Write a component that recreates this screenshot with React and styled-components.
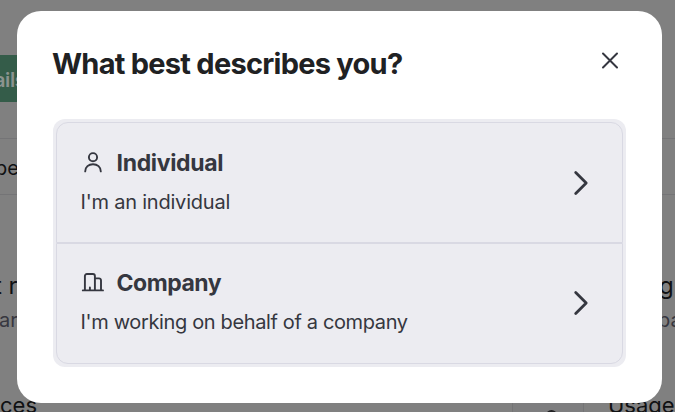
import React from 'react';
import styled, { createGlobalStyle } from 'styled-components';

const GlobalStyle = createGlobalStyle`
* { box-sizing: border-box; }
body {
  margin: 0;
  overflow: hidden;
  font-family: Inter, "Liberation Sans", sans-serif;
}
`;

const Screen = styled.div`
position: relative;
width: 675px;
height: 412px;
overflow: hidden;
background: #808080;
`;

const Page = styled.div`
display: flex;
flex-direction: column;
height: 100%;
padding-top: 55px;
color: #101113;
`;

const DetailsButton = styled.div`
width: 60px;
height: 47px;
margin-bottom: 36px;
background: #345c49;
color: #8b938f;
font-size: 20px;
font-weight: 600;
line-height: 50px;
letter-spacing: -0.4px;
text-indent: -6px;
`;

const TableRow = styled.div`
height: 57px;
flex-shrink: 0;
border-top: 1px solid #747476;
border-bottom: 1px solid #747476;
font-size: 20px;
line-height: 58px;
text-indent: -5px;
`;

const Links = styled.div`
display: flex;
justify-content: space-between;
height: 153px;
flex-shrink: 0;
padding-top: 75px;
`;

const LinkCard = styled.div`
width: ${props => props.$width};
text-indent: ${props => props.$indent};
white-space: nowrap;
`;

const LinkTitle = styled.div`
height: 35px;
font-size: 24px;
line-height: 32px;
`;

const LinkNote = styled.div`
color: #37373f;
font-size: 20px;
line-height: 30px;
text-indent: -1px;
`;

const Footer = styled.div`
display: flex;
height: 66px;
flex-shrink: 0;
font-size: 22px;
line-height: 115px;
`;

const FooterLabel = styled.div`
width: 512px;
`;

const FooterIcon = styled.div`
display: flex;
justify-content: center;
width: 72px;
height: 66px;
padding: 62px 0 0 7px;
border-left: 1px solid #747476;
border-right: 1px solid #747476;
background: #7e7e7f;
`;

const Dot = styled.span`
width: 11px;
height: 11px;
border-radius: 50%;
background: #202023;
`;

const FooterText = styled.div`
padding-left: 24px;
`;

const Modal = styled.div`
position: absolute;
top: 11px;
left: 17px;
width: 645px;
height: 392px;
padding: 36px;
border-radius: 24px;
background: #fff;
`;

const Header = styled.div`
display: flex;
justify-content: space-between;
height: 72px;
`;

const Title = styled.h2`
margin: 0 0 0 -1px;
color: #202123;
font-size: 29px;
font-weight: 700;
line-height: 34px;
letter-spacing: -0.74px;
white-space: nowrap;
`;

const CloseButton = styled.button`
display: flex;
align-items: center;
justify-content: center;
width: 33px;
height: 27px;
padding: 0;
border: 0;
background: none;
color: #353740;
`;

const Options = styled.div`
padding: 3px;
border-radius: 12px;
background: #ececf1;
`;

const Option = styled.button`
display: flex;
align-items: center;
justify-content: space-between;
width: 100%;
height: 121px;
padding: ${props => props.$last ? '0 33px 2px 23px' : '0 33px 0 23px'};
border: 1px solid #d9d9e3;
border-radius: ${props => props.$last ? '0 0 12px 12px' : '12px 12px 0 0'};
background: #ececf1;
color: #353740;
font-family: inherit;
text-align: left;
`;

const OptionText = styled.div`
display: flex;
flex-direction: column;
gap: 7px;
`;

const OptionName = styled.div`
display: flex;
align-items: center;
gap: 12.6px;
height: 32px;
font-size: 23px;
font-weight: 700;
letter-spacing: ${props => props.$spacing};
`;

const OptionNote = styled.div`
height: 32px;
padding-left: 0.6px;
font-size: 20px;
line-height: 32px;
letter-spacing: ${props => props.$spacing};
white-space: nowrap;
`;

const Icon = styled.svg`
display: block;
flex-shrink: 0;
fill: none;
stroke: currentColor;
stroke-linecap: round;
stroke-linejoin: round;
`;

const PersonIcon = () => (
    <Icon width="24" height="24" viewBox="0 0 24 24" strokeWidth="1.9">
        <circle cx="13" cy="6.2" r="4.1" />
        <path d="M5.2 20.4c0-4.4 3.4-7.2 7.8-7.2s7.8 2.8 7.8 7.2" />
    </Icon>
);

const CompanyIcon = () => (
    <Icon width="24" height="24" viewBox="0 0 24 24" strokeWidth="1.9">
        <path d="M2.8 19.4h20.2M4.9 19.2V5a2 2 0 0 1 2-2h6a2 2 0 0 1 2 2v14.2M15 7.4h4a2 2 0 0 1 2 2v9.8M9.9 19v-2.5" />
    </Icon>
);

const Chevron = () => (
    <Icon width="16" height="26" viewBox="0 0 16 26" strokeWidth="2.8">
        <path d="M2.7 2.5 13.2 13 2.7 23.5" />
    </Icon>
);

const BestOption = ({ icon, name, note, last, nameSpacing, noteSpacing }) => (
    <Option $last={last}>
        <OptionText>
            <OptionName $spacing={nameSpacing}>{icon}{name}</OptionName>
            <OptionNote $spacing={noteSpacing}>{note}</OptionNote>
        </OptionText>
        <Chevron />
    </Option>
);

const App = () => {
    return <Screen>
        <GlobalStyle />
        <Page>
            <DetailsButton>ails</DetailsButton>
            <TableRow>be</TableRow>
            <Links>
                <LinkCard $width="17px" $indent="-6px">
                    <LinkTitle>t r</LinkTitle>
                    <LinkNote>ar</LinkNote>
                </LinkCard>
                <LinkCard $width="16px" $indent="0">
                    <LinkTitle>g</LinkTitle>
                    <LinkNote>pa</LinkNote>
                </LinkCard>
            </Links>
            <Footer>
                <FooterLabel>ces</FooterLabel>
                <FooterIcon><Dot /></FooterIcon>
                <FooterText>Usage</FooterText>
            </Footer>
        </Page>
        <Modal>
            <Header>
                <Title>What best describes you?</Title>
                <CloseButton aria-label="Close">
                    <Icon width="18" height="18" viewBox="0 0 18 18" strokeWidth="2">
                        <path d="M2 1.5l14 14M16 1.5l-14 14" />
                    </Icon>
                </CloseButton>
            </Header>
            <Options>
                <BestOption
                    icon={<PersonIcon />}
                    name="Individual"
                    note="I'm an individual"
                    nameSpacing="-0.35px"
                    noteSpacing="-0.22px"
                />
                <BestOption
                    last
                    icon={<CompanyIcon />}
                    name="Company"
                    note="I'm working on behalf of a company"
                    nameSpacing="-0.5px"
                    noteSpacing="-0.36px"
                />
            </Options>
        </Modal>
    </Screen>;
};

export default App;
